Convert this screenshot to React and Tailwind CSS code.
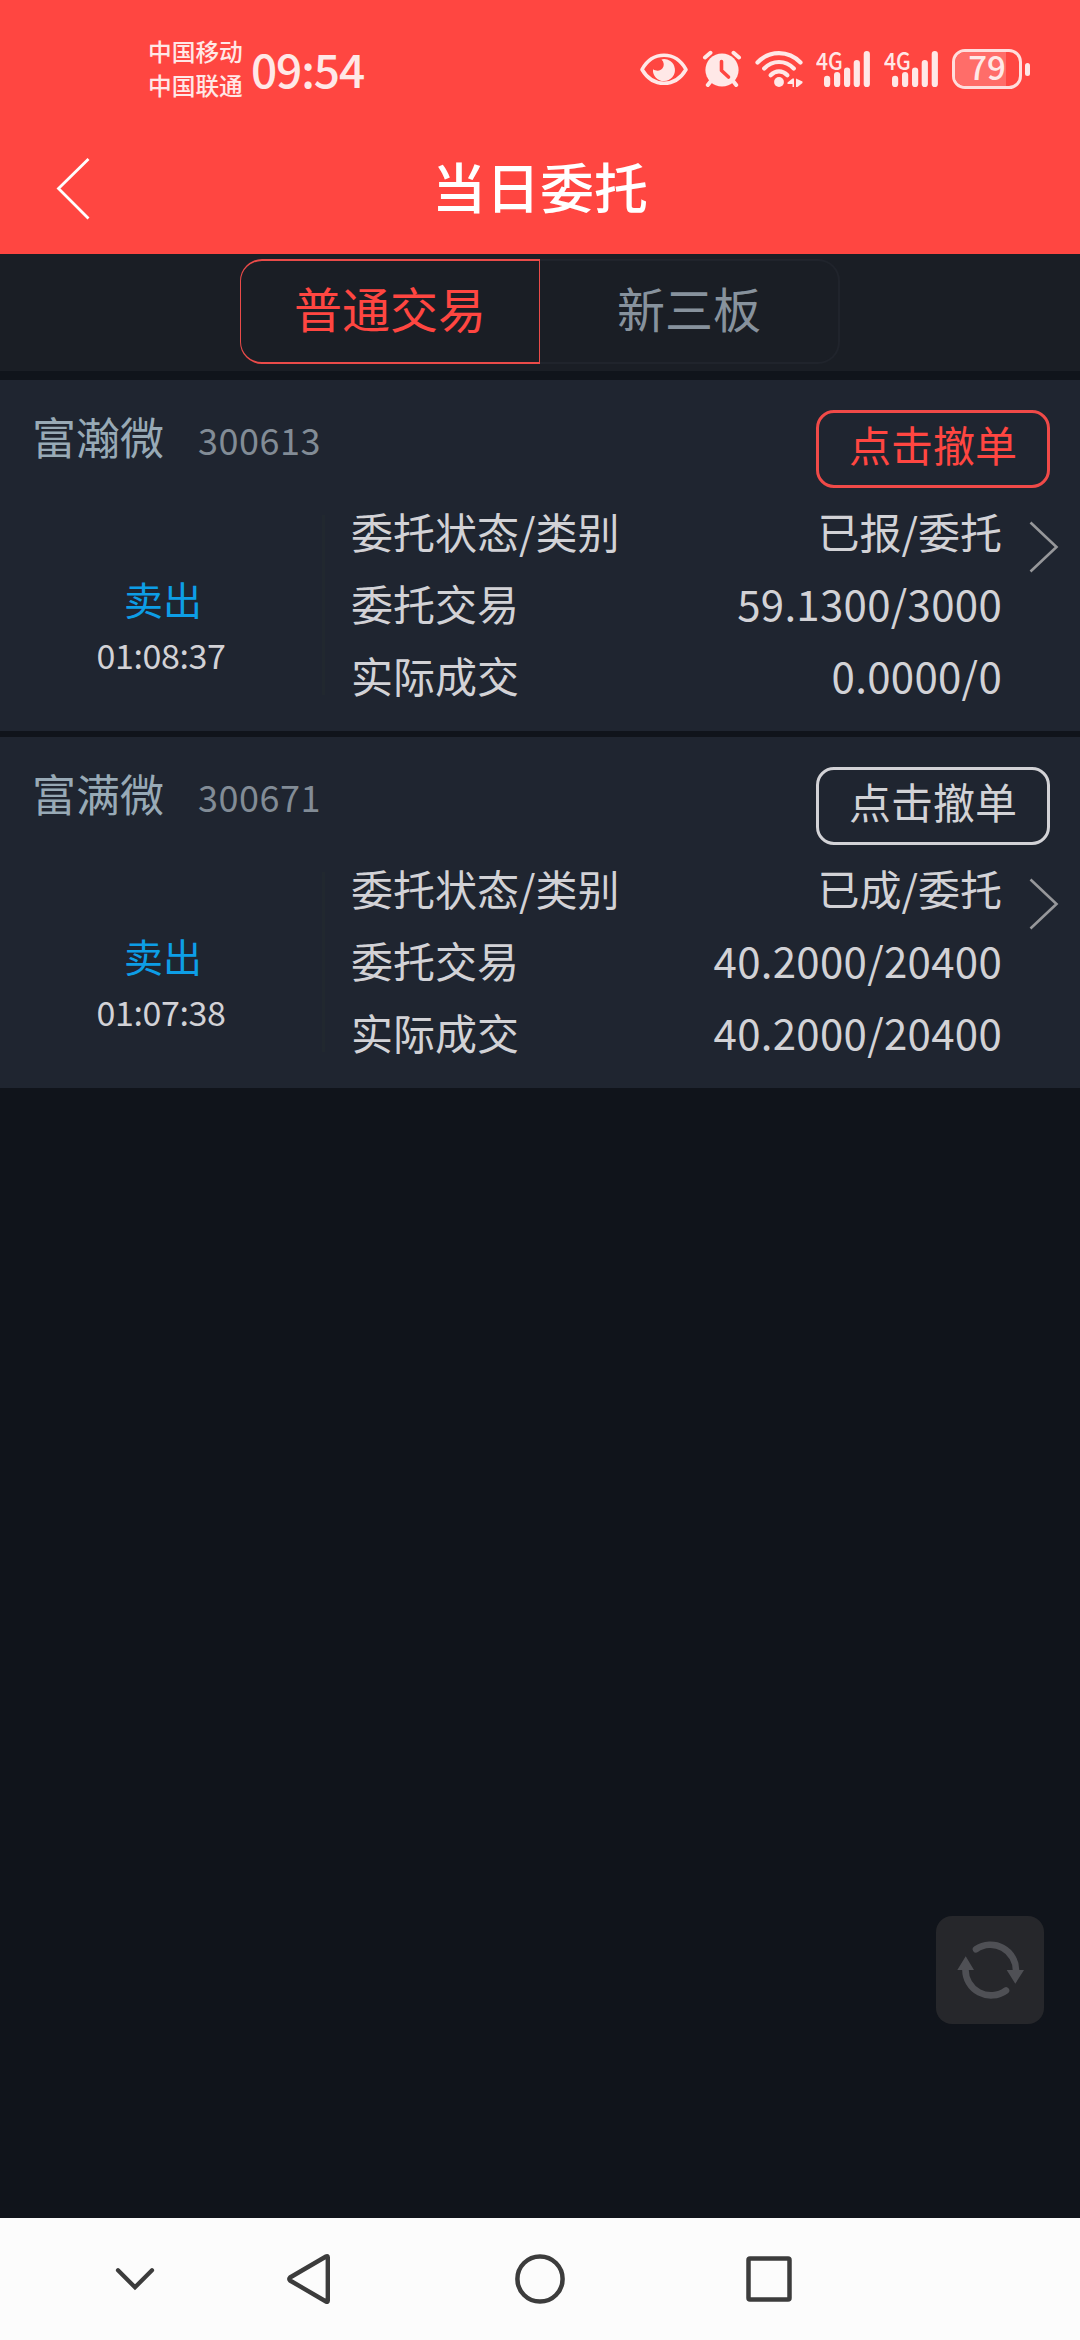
import React from 'react';
import clsx from 'clsx';

const orders = [
  {
    name: '富瀚微',
    code: '300613',
    side: '卖出',
    time: '01:08:37',
    cancelable: true,
    rows: [
      { label: '委托状态/类别', value: '已报/委托' },
      { label: '委托交易', value: '59.1300/3000', numeric: true },
      { label: '实际成交', value: '0.0000/0', numeric: true },
    ],
  },
  {
    name: '富满微',
    code: '300671',
    side: '卖出',
    time: '01:07:38',
    cancelable: false,
    rows: [
      { label: '委托状态/类别', value: '已成/委托' },
      { label: '委托交易', value: '40.2000/20400', numeric: true },
      { label: '实际成交', value: '40.2000/20400', numeric: true },
    ],
  },
];

const EyeIcon = () => (
  <svg className="w-[50px] h-[36px]" viewBox="0 0 50 36" fill="none">
    <path d="M3 18.5C8 9.5 16 4.3 25 4.3S42 9.5 47 18.5C42 27 34 32.3 25 32.3S8 27 3 18.5Z" stroke="currentColor" strokeWidth="3.6" strokeLinejoin="round" />
    <path d="M22.5 8.4A11 11 0 1 1 14 18.2C17.5 20.5 21.5 20 23.5 17.3C25.5 14.5 25.2 11 22.5 8.4Z" fill="currentColor" />
  </svg>
);

const AlarmIcon = () => (
  <svg className="w-[40px] h-[38px]" viewBox="0 0 40 38" fill="none" strokeLinecap="round">
    <circle cx="20" cy="20" r="16.6" fill="currentColor" />
    <path d="M3 7.5L8.5 2.8M37 7.5L31.5 2.8M9 31L5.8 35M31 31L34.2 35" stroke="currentColor" strokeWidth="4" />
    <path d="M19.5 11.5V20.5L26.5 27" stroke="#ff4641" strokeWidth="3.6" strokeLinejoin="round" />
  </svg>
);

const WifiIcon = () => (
  <svg className="w-[50px] h-[38px]" viewBox="0 0 50 38" fill="none">
    <g stroke="currentColor" strokeWidth="4.2" strokeLinecap="round">
      <path d="M3.5 12.5C15.5 0 34.5 0 46.5 12.5" />
      <path d="M10.2 18.5C18.5 9.8 31.5 9.8 39.8 18.5" />
      <path d="M16.6 25.2C21.5 20 28.5 20 33.4 25.2" />
    </g>
    <circle cx="25" cy="32" r="4.9" fill="currentColor" />
    <path d="M40 28.5V37H38.5V34H33.5V32.5L38.5 28.5ZM42 28.5L48.5 31.5V33L43.5 37H42Z" fill="currentColor" />
  </svg>
);

const SignalIcon = () => (
  <div className="relative w-[56px] h-[38px]">
    <svg className="w-[56px] h-[38px]" viewBox="0 0 56 38" fill="currentColor">
      <rect x="8" y="25.7" width="6.2" height="11.3" rx="3.1" />
      <rect x="18" y="22" width="6.2" height="15" rx="3.1" />
      <rect x="28" y="17.5" width="6.2" height="19.5" rx="3.1" />
      <rect x="37.7" y="10" width="6.2" height="27" rx="3.1" />
      <rect x="47.7" y="1" width="6.2" height="36" rx="3.1" />
    </svg>
    <span className="absolute left-0 -top-[8px] text-[24px] leading-[36px] font-medium origin-left scale-x-[0.88]">4G</span>
  </div>
);

const Battery = () => (
  <div className="flex items-center gap-[3px]">
    <div className="relative w-[70px] h-[40px] rounded-[13px] border-[3px] border-[#ffdedd]">
      <div className="absolute inset-y-0 left-0 w-[51px] rounded-l-[10px] bg-[#ff6d69]" />
      <div className="relative -mt-[10px] text-[33px] leading-[48px] font-medium text-center">79</div>
    </div>
    <div className="w-[5px] h-[13px] rounded-full bg-[#ffe8e7]" />
  </div>
);

const StatusBar = () => (
  <div className="flex h-[116px] pl-[148px] pr-[50px] text-[#ffe8e7]">
    <div className="w-[96px] pt-[34px] text-[23.7px] leading-[34px] font-medium">
      <div>中国移动</div>
      <div>中国联通</div>
    </div>
    <div className="ml-[7px] pt-[38px] text-[46px] leading-[60px] tracking-[-1.1px] font-medium">09:54</div>
    <div className="ml-auto flex h-[38px] mt-[50px] items-center">
      <EyeIcon />
      <div className="ml-[13px] flex"><AlarmIcon /></div>
      <div className="ml-[12px] flex"><WifiIcon /></div>
      <div className="ml-[12px] flex gap-[12px]">
        <SignalIcon />
        <SignalIcon />
      </div>
      <div className="ml-[12px]"><Battery /></div>
    </div>
  </div>
);

const TitleBar = () => (
  <div className="grid grid-cols-[1fr_auto_1fr] h-[138px] text-white">
    <svg className="ml-[55px] mt-[41px] w-[36px] h-[64px]" viewBox="0 0 36 64" fill="none">
      <path d="M33.5 2L3.5 31.5L33.5 61.5" stroke="currentColor" strokeWidth="2.8" />
    </svg>
    <h1 className="pt-px text-[54px] leading-[138px] font-medium">当日委托</h1>
  </div>
);

const Tabs = () => (
  <div className="flex justify-center h-[117px] pt-[5px] bg-[#1a1e25] text-[48px] leading-[93px] text-center">
    <div className="w-[300px] h-[105px] rounded-l-[22px] border border-y-2 border-[#ea4b49] text-[#ff4641]">普通交易</div>
    <div className="w-[300px] h-[105px] rounded-r-[22px] border-2 border-l-0 border-[#20242c] text-[#87929d]">新三板</div>
  </div>
);

const OrderCard = ({ order }) => (
  <div className="h-[351px] bg-[#1f2530]">
    <div className="flex items-start justify-between h-[115px] pl-[32px] pr-[30px]">
      <div className="flex items-baseline mt-[23px] leading-[66px]">
        <span className="text-[44px] text-[#98aab6]">{order.name}</span>
        <span className="ml-[34px] text-[36px] tracking-[0.5px] text-[#828c96]">{order.code}</span>
      </div>
      <button
        className={clsx(
          'w-[234px] h-[78px] mt-[30px] rounded-[18px] border-[3px] text-[42px] leading-[62px] pb-[10px]',
          order.cancelable ? 'border-[#f04a48] text-[#ff4641]' : 'border-[#d2d2d6] text-[#d2d2d6]'
        )}
      >
        点击撤单
      </button>
    </div>
    <div className="flex h-[216px] text-[#d2d2d6]">
      <div className="w-[322px] pt-[75px] text-center leading-[56px]">
        <div className="text-[39px] pl-[4px] text-[#0d9ee6]">{order.side}</div>
        <div className="pt-px text-[34px] tracking-[-0.4px]">{order.time}</div>
      </div>
      <div className="w-[3px] h-[180px] mt-[20px] bg-[#21282f]" />
      <div className="w-[677px] pl-[26px] text-[42px] leading-[72px]">
        {order.rows.map((row) => (
          <div key={row.label} className="flex justify-between">
            <span>{row.label}</span>
            <span className={clsx(row.numeric && 'tracking-[0.3px]')}>{row.value}</span>
          </div>
        ))}
      </div>
      <svg className="ml-[26px] mt-[25px] w-[32px] h-[54px]" viewBox="0 0 32 54" fill="none">
        <path d="M2.5 2.5L28.5 27L2.5 51.5" stroke="#96979a" strokeWidth="2.6" />
      </svg>
    </div>
  </div>
);

const RefreshButton = () => (
  <button className="absolute right-[36px] bottom-[194px] w-[108px] h-[108px] rounded-[16px] bg-[#26272b] text-[#4f5055]">
    <svg className="w-[108px] h-[108px]" viewBox="0 0 108 108" fill="none">
      <path d="M40 33.3A25.5 25.5 0 0 1 80 55M70 74.5A25.5 25.5 0 0 1 29.5 53" stroke="currentColor" strokeWidth="6.6" strokeLinecap="round" />
      <path d="M70.7 54H88L79.3 67.7ZM21.3 54H38L29.7 40.3Z" fill="currentColor" />
    </svg>
  </button>
);

const NavBar = () => (
  <nav className="flex items-center h-[122px] bg-[#fcfcfc]">
    <svg className="ml-[115px] w-[40px] h-[60px]" viewBox="0 0 40 60" fill="none">
      <path d="M3 21.3L20 38.3L37 21.3" stroke="#3c3c3c" strokeWidth="4.2" strokeLinecap="round" />
    </svg>
    <svg className="ml-[130px] w-[50px] h-[60px]" viewBox="0 0 50 60" fill="none">
      <path d="M42.8 8.5V51.5Q42.8 53.5 41 52.5L5 31.5Q3.5 30 5 28.5L41 7.5Q42.8 6.5 42.8 8.5Z" stroke="#3c3c3c" strokeWidth="4.4" strokeLinejoin="round" />
    </svg>
    <svg className="ml-[175px] w-[60px] h-[60px]" viewBox="0 0 60 60" fill="none">
      <circle cx="30" cy="30" r="22.6" stroke="#3c3c3c" strokeWidth="4.5" />
    </svg>
    <svg className="ml-[169px] w-[60px] h-[60px]" viewBox="0 0 60 60" fill="none">
      <rect x="9.5" y="9.5" width="41" height="41" rx="1.5" stroke="#3c3c3c" strokeWidth="4.5" />
    </svg>
  </nav>
);

const App = () => (
  <div className="relative flex flex-col w-[1080px] h-[2340px] overflow-hidden bg-[#10141b] font-['Noto_Sans_CJK_SC',sans-serif]">
    <header className="bg-[#ff4641]">
      <StatusBar />
      <TitleBar />
    </header>
    <Tabs />
    <main className="relative flex-1 pt-[9px] flex flex-col gap-[6px]">
      {orders.map((order) => (
        <OrderCard key={order.code} order={order} />
      ))}
      <RefreshButton />
    </main>
    <NavBar />
  </div>
);

export default App;
